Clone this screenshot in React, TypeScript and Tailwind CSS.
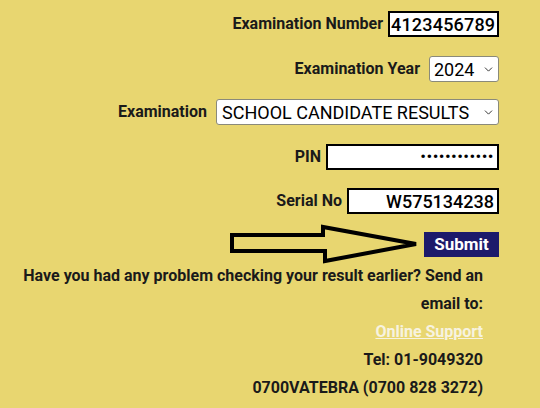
import { ChevronDown } from "lucide-react"

const font = { fontFamily: "Roboto, 'Noto Sans', sans-serif" }

function Arrow() {
  return (
    <svg width="192" height="40" viewBox="0 0 192 40" className="shrink-0">
      <path
        d="M4 11 L95 11 L95 3 L188 20 L97 37 L97 27 L4 27 Z"
        fill="none"
        stroke="#000"
        strokeWidth="4"
        strokeLinejoin="miter"
      />
    </svg>
  )
}

export default function App() {
  return (
    <div
      className="w-[540px] h-[408px] bg-[#e8d670] text-[#1a1a1a] overflow-hidden"
      style={font}
    >
      <div className="flex flex-col items-end pr-[41px] pt-[11px]">
        <div className="flex items-center gap-[5px] h-[26px]">
          <span className="text-[16px] font-bold">Examination Number</span>
          <div className="w-[111px] h-[26px] bg-white border-2 border-black flex items-center px-[1px] text-[18px] font-medium text-black tracking-[0.2px]">
            4123456789
          </div>
        </div>

        <div className="flex items-center gap-[9px] h-[26px] mt-[19px]">
          <span className="text-[16px] font-bold">Examination Year</span>
          <div className="w-[70px] h-[26px] bg-white border border-[#8a8a7a] rounded-[3px] flex items-center justify-between pl-[4px] pr-[3px] text-[18px] text-black">
            <span>2024</span>
            <ChevronDown size={13} strokeWidth={1.8} className="text-[#333]" />
          </div>
        </div>

        <div className="flex items-center gap-[9px] h-[26px] mt-[17px]">
          <span className="text-[16px] font-bold">Examination</span>
          <div className="w-[283px] h-[26px] bg-white border border-[#8a8a7a] rounded-[3px] flex items-center justify-between pl-[5px] pr-[3px] text-[18px] text-black">
            <span>SCHOOL CANDIDATE RESULTS</span>
            <ChevronDown size={13} strokeWidth={1.8} className="text-[#333]" />
          </div>
        </div>

        <div className="flex items-center gap-[5px] h-[26px] mt-[19px]">
          <span className="text-[16px] font-bold">PIN</span>
          <div className="w-[173px] h-[26px] bg-white border-2 border-black flex items-center justify-end pr-[3px] text-[17px] tracking-[0.4px] text-black">
            ••••••••••••
          </div>
        </div>

        <div className="flex items-center gap-[5px] h-[26px] mt-[18px]">
          <span className="text-[16px] font-bold">Serial No</span>
          <div className="w-[152px] h-[26px] bg-white border-2 border-black flex items-center justify-end pr-[3px] text-[18px] font-medium text-black">
            W575134238
          </div>
        </div>

        <div className="flex items-center gap-[4px] mt-[10px]">
          <Arrow />
          <button className="w-[75px] h-[25px] bg-[#1c1a6b] text-white text-[17px] font-bold leading-none">
            Submit
          </button>
        </div>

        <div className="pr-4 text-right text-[16px] font-bold leading-[28px] -mt-[2px]">
          <p>Have you had any problem checking your result earlier? Send an</p>
          <p>email to:</p>
          <p>
            <a href="#" className="text-[#f7f3e0] underline">
              Online Support
            </a>
          </p>
          <p>Tel: 01-9049320</p>
          <p>0700VATEBRA (0700 828 3272)</p>
        </div>
      </div>
    </div>
  )
}
